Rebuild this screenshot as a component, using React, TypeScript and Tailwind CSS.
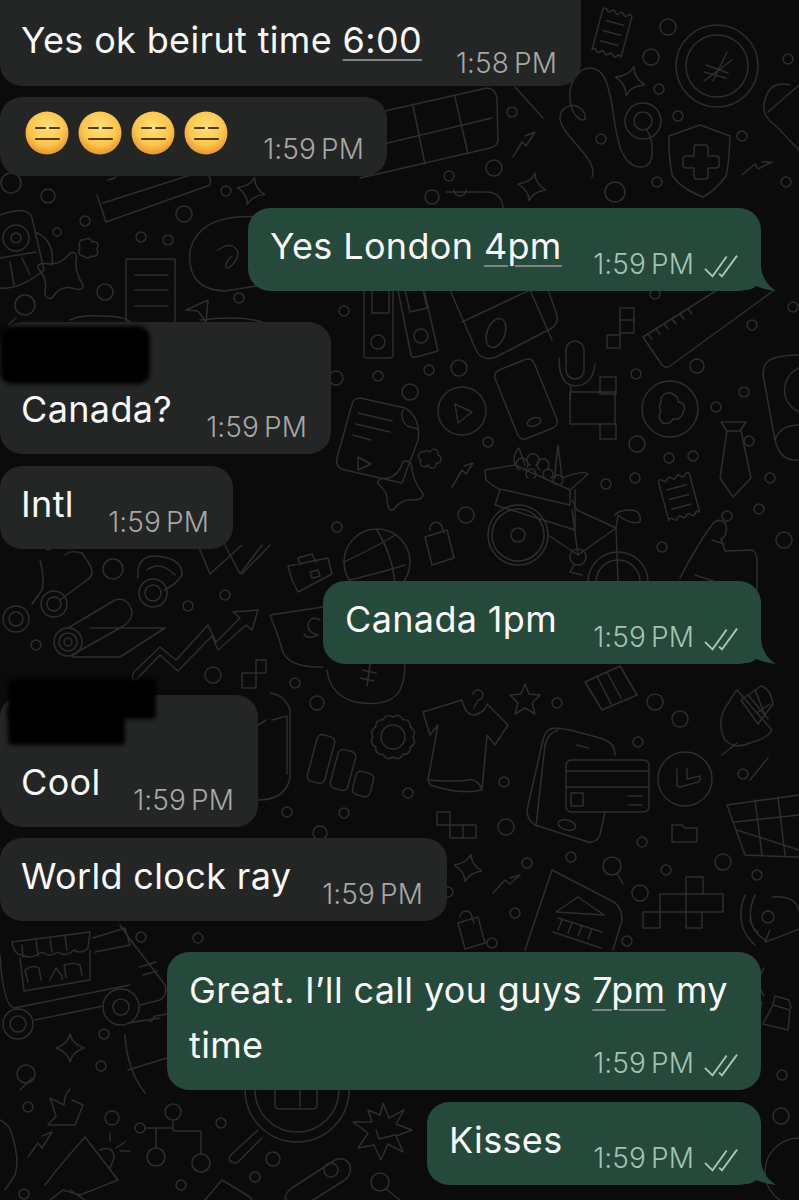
import React from "react";

const CIRCLES: number[][] = [
  [11,183,10],[48,196,7],[85,221,5],[184,214,8],[141,237,5],[168,240,5],[226,191,5],[105,292,8],[239,298,5],
  [668,27,8],[651,57,8],[659,89,5],[788,59,5],[678,116,5],[742,136,5],[657,182,5],[786,182,5],[512,112,5],[601,139,5],[494,168,8],[449,176,5],[432,197,7],[615,192,10],
  [344,311,5],[378,376,5],[429,370,5],[459,368,8],[410,392,8],[336,378,7],[488,442,5],[466,515,8],[337,527,5],[636,374,5],[697,366,7],[752,325,5],[793,307,5],[744,392,5],[716,407,5],[637,444,8],[669,458,5],[693,456,5],[635,478,5],[606,484,5],[749,441,5],[770,478,5],[759,509,5],[727,516,5],[662,547,5],[784,540,8],[655,294,5],
  [113,569,10],[188,606,5],[225,595,5],[36,645,5],[213,675,8],[295,683,5],
  [317,703,7],[557,703,5],[655,702,8],[680,719,8],[638,742,5],[743,774,5],[504,782,5],[408,793,5],[287,812,5],[344,813,5],[320,833,7],[506,827,8],[642,842,5],[571,857,5],[527,863,5],[666,870,5],[723,862,8],[757,875,5],[448,892,5],[640,893,8],[515,913,5],[627,941,5],[492,943,5],
  [141,937,5],[198,938,5],[104,1034,5],[101,1066,5],[28,1107,5],[112,1118,7],[221,1123,5],[273,1159,7],[255,1177,5],[181,1185,5],[24,1194,5],
  [782,1075,5],[781,1116,8],[799,1172,34],
  [16,619,13],[16,619,7],[54,604,13],[54,604,7],[153,593,14],[153,593,8],
  [68,642,14],[68,642,9],[68,642,4],[378,342,7],[421,336,7],[717,66,41],[717,66,31],[643,121,18],[643,121,9],
  [462,411,24],[670,409,28],[518,535,30],[518,535,7],[518,535,26],[618,582,30],[618,582,22],[377,562,33],
  [393,737,12],[685,779,27],[612,866,9],[768,917,6],[18,1024,15],[18,1024,8],[121,1007,18],[121,1007,8],
  [173,1112,8],[140,1128,5],[156,1157,9],[201,1163,9],[297,1090,52],[297,1090,42],[26,1074,9],[380,1182,9],[331,1170,7],[16,238,13],[16,238,5],[57,232,4],
];

const PATHS: string[] = [
  "M592 177C600 160 560 135 560 118C560 104 580 100 585 115C588 125 572 120 570 100C568 80 580 68 590 68C605 68 608 85 612 105C616 130 618 165 640 167C655 168 655 145 647 130",
  "M515 87L543 118",
  "M700 125L730 136Q729 165 726 176Q716 190 703 197Q680 188 672 175Q668 150 669 136Z",
  "M695 145h10q3 0 3 3v8h8q3 0 3 3v6q0 3-3 3h-8v8q0 3-3 3h-8q-3 0-3-3v-8h-8q-3 0-3-3v-6q0-3 3-3h8v-8q0-3 3-3z",
  "M732 60L704 81M727 52L713 81M706 65L728 73M704 72L726 78",
  "M513 157L522 142L526 146L535 132L525 136M742 175L755 164L758 169L772 162L762 162",
  "M345 120L487 88Q495 88 497 98L498 140Q498 146 490 148L360 178",
  "M413 106L425 164M455 97L468 154M350 152L492 118",
  "M446 192h40q15 0 17 15v30M466 190a6 6 0 0 1-12 0",
  "M790 85Q770 80 765 100Q760 115 775 125L799 150M768 112L799 85",
  "M97 195L106 222L210 185Q212 178 206 172M103 203L200 172M108 180a12 6 -20 0 0 8 -3",
  "M0 215Q28 205 32 218L44 270Q20 290 0 288M35 232Q55 240 52 265M0 258L36 252M10 262L14 285M22 258L30 275",
  "M70 253Q78 250 76 262Q75 272 83 285Q84 292 72 288Q60 285 52 298Q44 300 45 290Q48 280 38 268Q36 262 50 264Q62 264 70 253Z",
  "M84 240q6-4 8 2q6-2 6 4q-2 4 0 6q-2 6-7 4q-4 4-7 0q-6 0-5-6q2-2 0-4q0-7 5-6z",
  "M126 259h49v66M126 259v66M135 275h33M135 290h33M135 306h33",
  "M262 217Q200 212 190 250Q186 290 225 291L262 285M218 250Q232 240 238 252Q238 262 228 268Q222 266 232 256",
  "M186 310L208 300L206 322L198 311Z",
  "M16 318L8 325M15 305a10 10 0 1 0 20 0a10 10 0 1 0 -20 0",
  "M70 320Q80 315 100 316Q130 316 132 325M200 320Q240 315 262 322",
  "M364 290V356Q364 358 368 358H389Q393 358 393 355V290M372 290v23h17v-23",
  "M398 290L411 355Q412 358 416 357L438 351L424 290M405 290l5 22l17-4l-4-18",
  "M450 290L476 350Q482 362 496 357L552 328Q560 322 556 312L548 290M462 322L530 290L552 340",
  "M566 350a9 9 0 0 1 18 0v20a9 9 0 0 1-18 0zM559 358q0 27 16 28q18-1 20-22M571 386l-1 13",
  "M620 308h14v25h-14zM620 320h14M607 335h13v13h-13zM620 333v2",
  "M600 377h16v17h-16zM570 392h45v32h-45zM600 424h16v15h-16z",
  "M643 337L662 365Q666 369 670 366L773 291M643 337L725 285M648 334l4 5M656 329l4 5M664 324l4 5M672 319l4 5M680 314l4 5M688 309l4 5",
  "M721 422h25l-6 9h-13zM727 431L720 478L733 497L751 478L741 431",
  "M799 355Q770 355 765 365Q762 372 764 380L775 440Q780 462 799 460M799 368a24 24 0 0 0 0 44M775 440q5-15 24-15",
  "M360 398L405 408Q412 412 416 420Q420 430 418 440L402 483L345 470Q335 468 337 458L352 404Q354 398 360 398Z",
  "M358 413l34 8M356 424l34 8M353 435l18 5M403 410q-4 8 4 16l11 3",
  "M358 457L371 464L358 470Z",
  "M455 404L472 412L458 423Z",
  "M430 452a4 4 0 0 1 8 3a4 4 0 0 1-2 8a4 4 0 0 1-8 2a4 4 0 0 1-7-5a4 4 0 0 1 3-8a4 4 0 0 1 6 0z",
  "M403 462Q412 458 412 470Q414 482 423 494Q424 500 412 500Q402 498 393 510Q388 512 387 500Q388 492 378 484Q376 478 388 478Q398 476 403 462Z",
  "M452 487L462 470L466 474L473 463L464 466",
  "M673 394a8 8 0 0 1 5 8a6 6 0 0 1 5 10a8 8 0 0 1-10 7a8 8 0 0 1-10 4a8 8 0 0 1-2-12a8 8 0 0 1 0-9a8 8 0 0 1 12-8z",
  "M485 470L515 465L570 490L570 505L505 490Q497 490 486 480Z",
  "M500 490L495 505L575 530L575 490M515 465Q512 455 519 448L525 465M555 478Q555 470 558 445L562 478Q585 470 588 474L570 490",
  "M520 470a6 6 0 1 1 4 0M530 465a6 6 0 1 1 6 0M540 470a6 6 0 1 1 6 0M528 478a5 5 0 1 1 6 0M545 478a5 5 0 1 1 6 0M555 484a5 5 0 1 1 6 0",
  "M548 535L578 555L616 528L577 510L572 500M578 555L572 510M616 528L618 582M616 528L618 515Q630 525 640 522Q642 512 632 510Q618 510 615 515",
  "M570 557a8 8 0 1 1 16 0a8 8 0 1 1-16 0M574 565L570 572L582 575",
  "M344 562Q380 545 395 535M377 530Q395 560 395 590M350 580Q390 570 405 565",
  "M430 530a6 6 0 0 1 12-3l2 6M425 537l22-7l7 28l-22 7z",
  "M680 578Q700 540 712 525a7 7 0 0 1 14 6a8 8 0 0 1-5 8l4 12L752 550Q758 552 757 565V590M695 575l30 10M712 540l12 4",
  "M40 560Q45 580 42 590L32 604M60 600L87 580Q95 575 90 565L82 553Q70 550 65 555M47 550L62 545",
  "M138 578Q136 556 155 556Q183 558 182 575Q176 585 164 590M147 570Q160 560 175 575",
  "M68 628L115 600Q128 596 132 612Q132 622 120 628L72 655M90 628H165L120 657H72",
  "M136 680L160 655L178 671L212 636L218 650L246 625L252 630L258 610L233 612L240 618L216 642L208 625L176 660L160 647L134 672Q130 680 136 680Z",
  "M242 673h14v15h-14zM256 660h10v13h-10z",
  "M270 615L323 607M270 615Q280 640 282 650Q288 668 323 667M320 620q-10-5-12 5q0 8 10 10q-10 5-14-1",
  "M198 545L210 574L242 545M225 545L240 574L262 545M242 574L270 545",
  "M292 580L288 566L328 558L332 574L298 592zM300 565L298 558L312 554L316 562M310 572l8-2l2 6l-8 2z",
  "M327 670Q330 695 355 702Q390 708 400 690Q405 680 405 664M370 664l-3 22M362 670l14 3M360 678l14 3",
  "M270 693Q285 695 290 710L290 778Q285 800 258 800M272 720l15-4v58M258 725l8-5",
  "M423 712L462 700Q465 715 475 715Q485 712 487 704L508 725L495 745L487 735L482 790Q460 795 430 785L428 780L438 725L430 735Z",
  "M428 780Q455 782 468 780Q478 778 482 790M473 694a5 5 0 1 1 5 6l-4 8",
  "M585 682L620 666L637 695L602 710ZM597 676l14 28M607 672l14 26",
  "M553 728Q560 728 570 730L600 738Q615 742 615 755M553 728Q545 730 543 740L527 810Q527 820 535 825L585 841Q595 845 600 835L605 812M536 826L545 745Q548 733 558 730M577 745l11 3",
  "M572 760h71q6 0 6 6v40q0 6-6 6h-71q-6 0-6-6v-40q0-6 6-6zM566 771h83M566 787h83M571 793h12v13h-12zM628 796h14M628 805h14",
  "M677 769v15q0 3 3 3l18-5q3-2 2-6l-13 3v-10",
  "M722 755l15-12M725 740Q715 720 729 702Q735 692 737 690L772 730Q768 738 750 743Q735 750 725 740ZM741 700l20-14q10 3 12 18l-15 20zM748 695l20 24M755 690l10 25M758 712l12-8",
  "M750 780l18-22M727 805L799 795M735 822L799 815M737 830L799 850M727 805L745 855L799 857M755 800l7 55M778 797l7 58",
  "M672 825h10l3 3h12v14h-25z",
  "M437 812h13v13h-13zM450 825h13v13h-13zM463 825h13v13h-13z",
  "M493 893L505 880L510 884L520 875L510 878",
  "M460 917a6 6 0 0 1 12 0l2 6M458 923l20-6l7 26l-20 6z",
  "M618 875L623 884",
  "M552 870L525 950M552 870L610 900Q622 905 622 920L613 950",
  "M556 912L578 897L604 915ZM558 918l44 14M562 920l-4 10M572 923l-4 10M582 926l-4 10M592 929l-4 10M553 932l48 16",
  "M686 877h17v17h-17zM660 894h63v18h-63M660 894v17M643 912h17v16h-17zM686 894v34h16v-16M703 912h17",
  "M745 895Q733 925 755 945M755 895Q742 925 765 940M772 897Q795 895 799 910M770 930l-5 12l14-5l20-8M750 920q3 10 8 12",
  "M12 942L90 932L88 948Q82 955 74 950Q65 958 58 952Q50 958 42 952Q30 960 22 955Q14 955 12 942ZM22 945l1 12M36 940l2 16M50 938l2 14M65 936l2 14",
  "M20 958L24 991L90 980L90 950M28 982l-3-12q8-6 14-2l2 12M50 980l6-12l6 8l0 4M66 977l-2-12q10-3 16 0l2 10",
  "M0 955Q3 1005 14 1008M14 1008L130 985M35 1020L103 1006M140 1005L160 1000Q168 995 165 985L150 965Q130 940 120 925M93 938L125 928L130 945L95 952M140 967l16-5M143 975l14-4",
  "M128 1023L160 1018M125 1035Q127 1070 145 1093M128 1070L167 1058M150 1022l5-6l12-2",
  "M32 1078L20 1090",
  "M70 1089Q64 1095 64 1105L50 1098L56 1116L48 1125L75 1125L83 1105L72 1100",
  "M28 1157L38 1143L42 1148L52 1132L42 1136",
  "M45 1185Q60 1165 85 1137L118 1180L80 1195L63 1190L50 1200M100 1150q14-5 14 8l-4 10M110 1133v8M125 1142l-9 6M130 1151h-10M70 1190l15 10",
  "M145 1128h27M156 1128v20M173 1120v9q0 2 2 2h24q2 0 2 2v21",
  "M258 1130L232 1154Q226 1160 232 1162Q236 1165 240 1160L262 1138",
  "M275 1085h42v20q0 4-4 4h-34q-4 0-4-4zM285 1085q-2-10 3-12h16q6 3 4 12M300 1085v22",
  "M383 1103L389 1118L404 1110L396 1124L412 1130L396 1136L403 1152L388 1144L381 1160L374 1145L358 1148L368 1133L353 1122L372 1122L368 1110L380 1115Z M376 1130l3 9l16-4",
  "M292 1188L335 1160Q345 1156 350 1165Q352 1174 345 1180L302 1207Q290 1205 285 1198Q286 1192 292 1188Z",
  "M386 1189L400 1200",
  "M205 1200L222 1180L250 1197L255 1205",
  "M0 1120Q10 1125 12 1135Q20 1160 15 1175L5 1190",
  "M773 1005L790 1010L788 1030L763 1024zM773 1005l2-9l14 4l2 8M758 1020l4-18",
  "M755 960q-12 20 0 38M764 968q-9 14 0 28",
  "M525 684l4 10l11 1l-8 8l3 11l-10-6l-10 6l3-11l-8-8l11-1z",
];

const sparkle = (x: number, y: number, r: number) =>
  `M${x} ${y - r}Q${x + r * 0.15} ${y - r * 0.3} ${x + r} ${y}Q${x + r * 0.15} ${y + r * 0.3} ${x} ${y + r}Q${x - r * 0.15} ${y + r * 0.3} ${x - r} ${y}Q${x - r * 0.15} ${y - r * 0.3} ${x} ${y - r}Z`;

const SPARKS: number[][] = [[630, 81, 15, 15], [532, 187, 14, 12], [70, 1048, 14, 0], [468, 868, 14, 12], [251, 191, 14, 15]];

function Receipt({ x, y, w, h, r }: { x: number; y: number; w: number; h: number; r: number }) {
  const wave = (dir: number) => {
    let s = "";
    const n = 7;
    for (let i = 0; i < n; i++) {
      s += `q${(dir * w) / n / 2} ${i % 2 ? 3 : -3} ${(dir * w) / n} 0`;
    }
    return s;
  };
  return (
    <g transform={`rotate(${r} ${x} ${y})`}>
      <path d={`M${x - w / 2} ${y - h / 2}${wave(1)}V${y + h / 2}${wave(-1)}Z`} />
      <path d={`M${x - w / 2 + 6} ${y - h / 4}h${w - 12}M${x - w / 2 + 6} ${y}h${w - 12}M${x - w / 2 + 6} ${y + h / 4}h${w - 12}`} />
    </g>
  );
}

function Gear({ x, y, r, n }: { x: number; y: number; r: number; n: number }) {
  let d = "";
  for (let i = 0; i < n; i++) {
    const a = (i / n) * Math.PI * 2;
    const b = ((i + 1) / n) * Math.PI * 2;
    const p = (t: number, q: number) => `${(x + q * Math.cos(t)).toFixed(1)} ${(y + q * Math.sin(t)).toFixed(1)}`;
    d += (i === 0 ? `M${p(a, r)}` : "") + `Q${p((a + b) / 2, r + 5)} ${p(b, r)}`;
  }
  return <path d={d + "Z"} />;
}

function Doodles() {
  return (
    <svg
      className="absolute inset-0"
      width="799"
      height="1200"
      viewBox="0 0 799 1200"
      fill="none"
      stroke="#2e2e2e"
      strokeWidth="1.5"
      strokeLinecap="round"
      strokeLinejoin="round"
    >
      {CIRCLES.map((c, i) => (
        <circle key={i} cx={c[0]} cy={c[1]} r={c[2]} />
      ))}
      {PATHS.map((d, i) => (
        <path key={i} d={d} />
      ))}
      {SPARKS.map((s, i) => (
        <path key={i} d={sparkle(s[0], s[1], s[2])} transform={`rotate(${s[3]} ${s[0]} ${s[1]})`} />
      ))}
      <rect x="505" y="362" width="42" height="74" rx="7" transform="rotate(-22 526 399)" />
      <ellipse cx="534" cy="422" rx="7" ry="4" transform="rotate(-20 534 422)" />
      <ellipse cx="496" cy="333" rx="9" ry="15" transform="rotate(20 496 333)" />
      <Receipt x={612} y={33} w={30} h={42} r={15} />
      <Receipt x={679} y={497} w={32} h={40} r={-15} />
      <Gear x={393} y={737} r={20} n={12} />
      <rect x="312" y="735" width="18" height="48" rx="5" transform="rotate(15 321 759)" />
      <rect x="334" y="750" width="18" height="40" rx="5" transform="rotate(15 343 770)" />
      <rect x="354" y="772" width="18" height="24" rx="5" transform="rotate(15 363 784)" />
      <ellipse cx="567" cy="825" rx="9" ry="5" transform="rotate(15 567 825)" />
    </svg>
  );
}

function Check() {
  return (
    <svg width="34" height="24" viewBox="0 0 36 24" fill="none" stroke="#a8c8b8" strokeWidth="2" className="mb-[2px]">
      <path d="M1 15L9 23L24 2" />
      <path d="M16 20L19 23L35 1" />
    </svg>
  );
}

function Tail() {
  return (
    <svg className="absolute right-[-15px] bottom-0" width="30" height="30" viewBox="0 0 30 30" fill="#25493a">
      <path d="M15 0V6Q17 22 30 30Q20 29 10 25Q6 29 0 29Z" />
    </svg>
  );
}

const timeText = "text-[28px] leading-[32px] whitespace-nowrap [word-spacing:-3px] tracking-[0.1px] font-light";
const bodyText = "text-[36px] text-[#f7f8f7] whitespace-nowrap tracking-[0.35px]";
const mark = "underline decoration-[#7f8584] decoration-[1.5px] underline-offset-[6px]";

function Time({ t, sent }: { t: string; sent?: boolean }) {
  return (
    <span className={`flex items-end gap-[10px] mb-[11px] ${timeText} ${sent ? "text-[#a3c3b3]" : "text-[#a6a8a7]"}`}>
      {t}
      {sent && <Check />}
    </span>
  );
}

function Bubble({
  w,
  mt,
  sent,
  tail,
  redact,
  children,
}: {
  w: string;
  mt: string;
  sent?: boolean;
  tail?: boolean;
  redact?: React.ReactNode;
  children: React.ReactNode;
}) {
  return (
    <div
      className={`relative ${w} ${mt} rounded-[22px] ${
        sent ? "self-end mr-[38px] bg-[#25493a] pl-[22px] pr-[23px]" : "self-start bg-[#242626] pl-[21px] pr-[24px]"
      }`}
    >
      {redact}
      <div className="flex justify-between items-end">
        <span className={`pt-[16px] pb-[23px] leading-[44px] ${bodyText}`}>{children}</span>
        <Time t="1:59 PM" sent={sent} />
      </div>
      {tail && <Tail />}
    </div>
  );
}

function Emoji() {
  return (
    <svg width="44" height="44" viewBox="0 0 44 44">
      <defs>
        <radialGradient id="face" cx="50%" cy="38%" r="64%">
          <stop offset="0%" stopColor="#ffe07a" />
          <stop offset="62%" stopColor="#fdc64e" />
          <stop offset="100%" stopColor="#e8902a" />
        </radialGradient>
      </defs>
      <circle cx="22" cy="22" r="21.5" fill="url(#face)" />
      <path d="M11 17h9M25 17h9M11 28h23" stroke="#5a3a14" strokeWidth="2.2" strokeLinecap="round" />
    </svg>
  );
}

export default function App() {
  return (
    <div className="relative w-[799px] h-[1200px] overflow-hidden bg-[#0b0b0b] font-[Inter,'Liberation_Sans',sans-serif]">
      <Doodles />
      <div className="relative flex flex-col">
        <div className="w-[581px] self-start rounded-b-[22px] bg-[#242626] pl-[21px] pr-[24px] flex justify-between items-end">
          <span className={`pt-[18px] pb-[24px] leading-[44px] ${bodyText}`}>
            Yes ok beirut time <span className={mark}>6:00</span>
          </span>
          <span className={`mb-[7px] ${timeText} text-[#a6a8a7]`}>1:58 PM</span>
        </div>

        <div className="w-[387px] h-[79px] mt-[11px] self-start rounded-[22px] bg-[#242626] pl-[25px] pr-[23px] flex justify-between items-start">
          <div className="flex gap-[9px] pt-[14px]">
            <Emoji />
            <Emoji />
            <Emoji />
            <Emoji />
          </div>
          <span className={`mt-[36px] ${timeText} text-[#a6a8a7]`}>1:59 PM</span>
        </div>

        <Bubble w="w-[513px]" mt="mt-[32px]" sent tail>
          Yes London <span className={mark}>4pm</span>
        </Bubble>

        <Bubble
          w="w-[331px]"
          mt="mt-[31px]"
          redact={
            <>
              <div className="h-[49px]" />
              <div className="absolute left-[0px] top-[4px] w-[150px] h-[58px] rounded-[12px] bg-[#000000] blur-[2px]" />
            </>
          }
        >
          Canada?
        </Bubble>

        <Bubble w="w-[233px]" mt="mt-[12px]">
          Intl
        </Bubble>

        <Bubble w="w-[438px]" mt="mt-[32px]" sent tail>
          Canada 1pm
        </Bubble>

        <Bubble
          w="w-[258px]"
          mt="mt-[31px]"
          redact={
            <>
              <div className="h-[49px]" />
              <div className="absolute left-[8px] top-[-16px] w-[148px] h-[40px] rounded-[4px] bg-[#000000] blur-[2px]" />
              <div className="absolute left-[8px] top-[14px] w-[117px] h-[36px] rounded-[4px] bg-[#000000] blur-[2px]" />
            </>
          }
        >
          Cool
        </Bubble>

        <Bubble w="w-[447px]" mt="mt-[11px]">
          World clock ray
        </Bubble>

        <div className="relative w-[594px] h-[138px] mt-[31px] self-end mr-[38px] rounded-[22px] bg-[#25493a] pl-[22px] pr-[23px] pt-[11px] flex flex-col">
          <div className={`leading-[55px] ${bodyText}`}>
            Great. I’ll call you guys <span className={mark}>7pm</span> my
            <br />
            time
          </div>
          <div className="self-end mt-[-26px]">
            <Time t="1:59 PM" sent />
          </div>
        </div>

        <Bubble w="w-[334px]" mt="mt-[12px]" sent tail>
          Kisses
        </Bubble>
      </div>
    </div>
  );
}
